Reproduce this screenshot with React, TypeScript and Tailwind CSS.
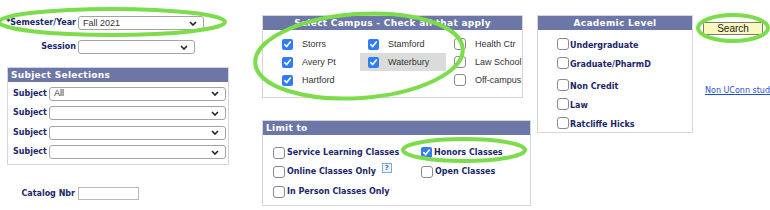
import React from 'react';

const label = "font-['DejaVu_Sans',sans-serif] font-bold text-[8px] text-[#1b2768]";
const plain = "font-['Liberation_Sans',Arial,sans-serif] text-[9px] text-[#333]";

const Chevron: React.FC = () => (
  <svg width="8" height="5" viewBox="0 0 8 5" className="shrink-0">
    <path d="M1 1l3 3 3-3" fill="none" stroke="#222" strokeWidth="1.6" />
  </svg>
);

const Select: React.FC<{ value?: string; width: string }> = ({ value = '', width }) => (
  <div
    className={`${width} h-[14px] flex items-center justify-between pl-[4px] pr-[6px] border border-[#a4a4a4] rounded-[3px] bg-white`}
  >
    <span className={plain + ' leading-none text-[#222]'}>{value}</span>
    <Chevron />
  </div>
);

const Box: React.FC<{ checked?: boolean }> = ({ checked }) =>
  checked ? (
    <span className="w-[11px] h-[11px] rounded-[2px] bg-[#2f7cf6] flex items-center justify-center shrink-0">
      <svg width="9" height="9" viewBox="0 0 9 9">
        <path d="M1.8 4.6l1.9 2 3.6-4.6" fill="none" stroke="#fff" strokeWidth="1.6" strokeLinecap="round" strokeLinejoin="round" />
      </svg>
    </span>
  ) : (
    <span className="block w-[12px] h-[12px] rounded-[3px] border border-[#8a8a8a] bg-white shrink-0" />
  );

const Header: React.FC<{ title: string; left?: boolean }> = ({ title, left }) => (
  <div
    className={`h-[14px] bg-[#6c77a8] flex items-center ${left ? 'justify-start pl-[3px]' : 'justify-center'} font-['DejaVu_Sans',sans-serif] font-bold text-[9px] tracking-[0.3px] text-white leading-none`}
  >
    {title}
  </div>
);

const Campus: React.FC<{ name: string; checked?: boolean; hi?: boolean }> = ({ name, checked, hi }) => (
  <div className={`h-[18px] w-[86px] flex items-center pl-[8px] gap-[9px] ${hi ? 'bg-[#d9dcd9]' : ''}`}>
    <Box checked={checked} />
    <span className={plain + ' leading-none'}>{name}</span>
  </div>
);

const Limit: React.FC<{ name: string; checked?: boolean; help?: boolean }> = ({ name, checked, help }) => (
  <div className="h-[19.5px] flex items-center gap-[2px]">
    <Box checked={checked} />
    <span className={label + ' leading-none'}>{name}</span>
    {help && (
      <span className="ml-[4px] -mt-[8px] w-[10px] h-[10px] border border-[#7fa8d8] bg-[#eef4fb] flex items-center justify-center text-[7px] leading-none text-[#4a7cc0] font-['DejaVu_Sans',sans-serif] font-bold">
        ?
      </span>
    )}
  </div>
);

const Level: React.FC<{ name: string; tall?: boolean }> = ({ name, tall }) => (
  <div className={`${tall ? 'h-[22px] pt-[3px]' : 'h-[19px]'} flex items-center gap-[1px]`}>
    <div className="-mt-[4px] shrink-0">
      <Box />
    </div>
    <span className={label + ' leading-none'}>{name}</span>
  </div>
);

export default function App() {
  return (
    <div className="relative w-[770px] h-[210px] bg-white overflow-hidden flex">
      {/* left column */}
      <div className="w-[262px] shrink-0 flex flex-col">
        <div className="mt-[16px] flex items-center">
          <span className={label + ' w-[78px] text-right pr-[2px] leading-none'}>*Semester/Year</span>
          <Select value="Fall 2021" width="w-[126px]" />
        </div>
        <div className="mt-[10px] flex items-center">
          <span className={label + ' w-[78px] text-right pr-[2px] leading-none'}>Session</span>
          <Select width="w-[117px]" />
        </div>
        <div className="mt-[13px] ml-[7px] w-[222px] border border-[#d3d6e0]">
          <Header title="Subject Selections" left />
          <div className="pt-[2px] pb-[2px]">
            {['All', '', '', ''].map((v, i) => (
              <div key={i} className="h-[19.5px] flex items-center pl-[5px] gap-[2px]">
                <span className={label + ' leading-none w-[34px]'}>Subject</span>
                <Select value={v} width="w-[177px]" />
              </div>
            ))}
          </div>
        </div>
        <div className="mt-[22px] flex items-center">
          <span className={label + ' w-[78px] text-right pr-[3px] leading-none'}>Catalog Nbr</span>
          <div className="w-[61px] h-[13px] border border-[#b8b8b8] bg-white" />
        </div>
      </div>

      {/* campus + limit */}
      <div className="w-[275px] shrink-0 flex flex-col">
        <div className="mt-[15px] w-[261px] h-[83px] border border-[#d3d6e0]">
          <Header title="Select Campus - Check all that apply" />
          <div className="pt-[5px] pl-[11px] grid grid-cols-[86px_86px_76px]">
            <Campus name="Storrs" checked />
            <Campus name="Stamford" checked />
            <Campus name="Health Ctr" />
            <Campus name="Avery Pt" checked />
            <Campus name="Waterbury" checked hi />
            <Campus name="Law School" />
            <Campus name="Hartford" checked />
            <div />
            <Campus name="Off-campus" />
          </div>
        </div>
        <div className="mt-[22px] w-[269px] h-[86px] border border-[#d3d6e0]">
          <Header title="Limit to" left />
          <div className="pt-[8px] pl-[10px] grid grid-cols-[148px_1fr]">
            <Limit name="Service Learning Classes" />
            <Limit name="Honors Classes" checked />
            <Limit name="Online Classes Only" help />
            <Limit name="Open Classes" />
            <Limit name="In Person Classes Only" />
          </div>
        </div>
      </div>

      {/* academic level */}
      <div className="w-[166px] shrink-0">
        <div className="mt-[15px] w-[156px] h-[118px] border border-[#d3d6e0]">
          <Header title="Academic Level" />
          <div className="pt-[6px] pl-[19px]">
            <Level name="Undergraduate" />
            <Level name="Graduate/PharmD" />
            <Level name="Non Credit" tall />
            <Level name="Law" />
            <Level name="Ratcliffe Hicks" />
          </div>
        </div>
      </div>

      {/* search */}
      <div className="flex flex-col">
        <button className="mt-[22px] w-[60px] h-[13px] bg-[#fbf8bf] border border-[#7a7a6a] rounded-[1px] flex items-center justify-center font-['Liberation_Sans',Arial,sans-serif] text-[10px] leading-none text-[#222]">
          Search
        </button>
        <a className="mt-[50px] ml-[2px] whitespace-nowrap font-['DejaVu_Sans',sans-serif] text-[8px] text-[#1f4fd8] underline">
          Non UConn students
        </a>
      </div>

      {/* highlight ellipses */}
      <svg className="absolute inset-0 pointer-events-none" width="770" height="210">
        <g fill="none" stroke="#7ddc4c" strokeWidth="4">
          <ellipse cx="112" cy="22" rx="113" ry="13" />
          <ellipse cx="359" cy="56" rx="104" ry="42" transform="rotate(-4 359 56)" />
          <ellipse cx="464" cy="150" rx="61" ry="11" />
          <ellipse cx="733" cy="28" rx="35" ry="13" />
        </g>
      </svg>
    </div>
  );
}
